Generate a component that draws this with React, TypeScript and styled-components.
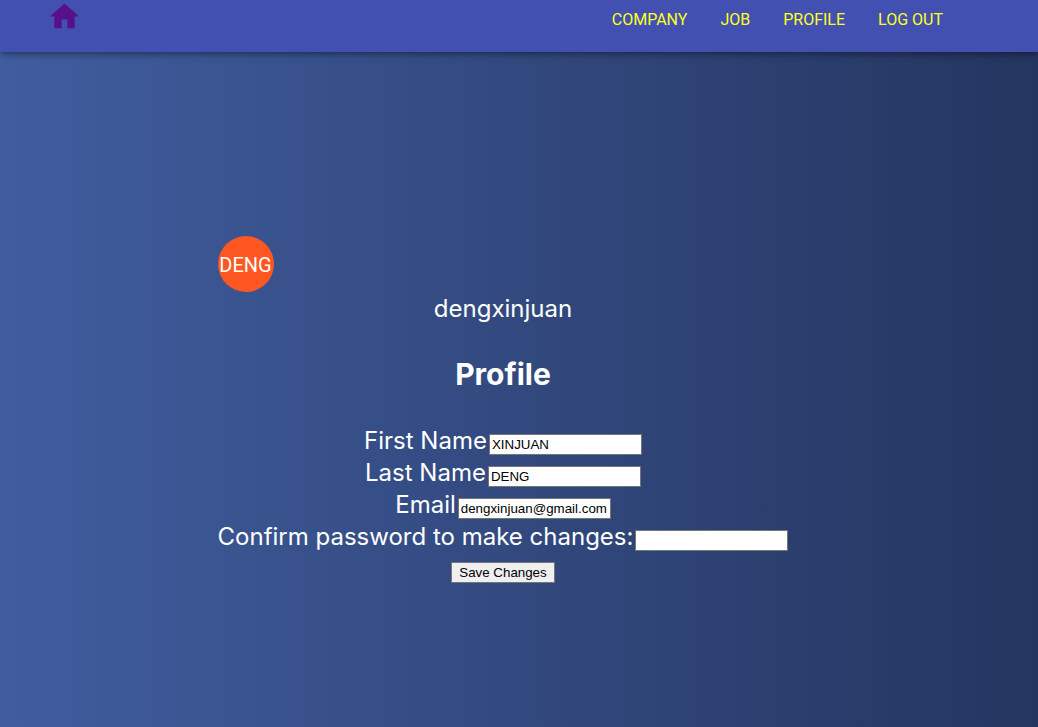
import React, { useState } from "react";
import styled, { createGlobalStyle } from "styled-components";

const GlobalStyle = createGlobalStyle`
  body {
    margin: 0;
    font-family: Inter, "Liberation Sans", sans-serif;
  }
  *, *::before, *::after {
    box-sizing: border-box;
  }
`;

const Page = styled.div`
  display: flex;
  flex-direction: column;
  min-height: 100vh;
  background: linear-gradient(to right, #405d9e, #24355f);
`;

const AppBar = styled.header`
  display: flex;
  justify-content: space-between;
  align-items: flex-start;
  height: 52px;
  padding: 0 95px 0 47px;
  background: #4250b2;
  box-shadow:
    0 2px 4px -1px rgba(0, 0, 0, 0.2),
    0 4px 5px 0 rgba(0, 0, 0, 0.14),
    0 1px 10px 0 rgba(0, 0, 0, 0.12);
`;

const HomeLink = styled.a`
  display: flex;
  color: #581088;
`;

const HomeIcon = styled.svg`
  width: 35px;
  height: 33px;
  fill: currentColor;
`;

const Nav = styled.nav`
  display: flex;
  gap: 33px;
  padding-top: 8px;
`;

const NavLink = styled.a`
  color: #ffff22;
  font-family: Roboto, sans-serif;
  font-size: 16px;
  line-height: 24px;
  text-decoration: none;
  text-transform: uppercase;
`;

const Main = styled.main`
  display: flex;
  justify-content: center;
  padding: 184px 32px 64px 0;
  color: #fff;
  font-size: 24px;
  line-height: 32px;
`;

const Card = styled.section`
  display: flex;
  flex-direction: column;
  align-items: center;
`;

const Avatar = styled.div`
  display: flex;
  align-items: center;
  justify-content: center;
  align-self: flex-start;
  width: 56px;
  height: 56px;
  padding-top: 2px;
  border-radius: 50%;
  background: #ff5722;
  font-family: Roboto, sans-serif;
  font-size: 20px;
`;

const UserName = styled.div`
  padding-top: 1px;
`;

const Title = styled.h1`
  margin: 31px 0 32px;
  font-size: 30px;
  font-weight: 700;
  line-height: 36px;
`;

const Form = styled.form`
  display: flex;
  flex-direction: column;
  align-items: center;
`;

const Field = styled.div`
  display: flex;
  align-items: baseline;
  gap: 2px;
  height: 32px;
  padding-top: 1px;
`;

const Input = styled.input`
  width: 153px;
  height: 21px;
  padding: 1px 2px;
  border: 1px solid #767676;
  border-radius: 0;
  background: #fff;
  color: #000;
  font-family: "Liberation Sans", Arial, sans-serif;
`;

const SaveButton = styled.button`
  width: 104px;
  height: 21px;
  margin-top: 10px;
  padding: 0;
  border: 1px solid #767676;
  border-radius: 1px;
  background: #efefef;
  color: #000;
  font-family: "Liberation Sans", Arial, sans-serif;
  line-height: 18px;
`;

const links = ["Company", "Job", "Profile", "Log out"];

const fields = [
  { id: "firstName", label: "First Name", type: "text", value: "XINJUAN" },
  { id: "lastName", label: "Last Name", type: "text", value: "DENG" },
  { id: "email", label: "Email", type: "email", value: "dengxinjuan@gmail.com" },
  { id: "password", label: "Confirm password to make changes:", type: "password", value: "" },
];

export default function App() {
  const [values, setValues] = useState<Record<string, string>>(
    Object.fromEntries(fields.map((f) => [f.id, f.value]))
  );

  return (
    <>
      <GlobalStyle />
      <Page>
        <AppBar>
          <HomeLink href="#home" aria-label="Home">
            <HomeIcon viewBox="0 1 24 22" aria-hidden="true">
              <path d="M10 20v-6h4v6h5v-8h3L12 3 2 12h3v8z" />
            </HomeIcon>
          </HomeLink>
          <Nav>
            {links.map((l) => (
              <NavLink key={l} href="#">
                {l}
              </NavLink>
            ))}
          </Nav>
        </AppBar>
        <Main>
          <Card>
            <Avatar>DENG</Avatar>
            <UserName>dengxinjuan</UserName>
            <Title>Profile</Title>
            <Form onSubmit={(e) => e.preventDefault()}>
              {fields.map((f) => (
                <Field key={f.id}>
                  <label htmlFor={f.id}>{f.label}</label>
                  <Input
                    id={f.id}
                    type={f.type}
                    value={values[f.id]}
                    onChange={(e) => setValues({ ...values, [f.id]: e.target.value })}
                  />
                </Field>
              ))}
              <SaveButton type="submit">Save Changes</SaveButton>
            </Form>
          </Card>
        </Main>
      </Page>
    </>
  );
}
